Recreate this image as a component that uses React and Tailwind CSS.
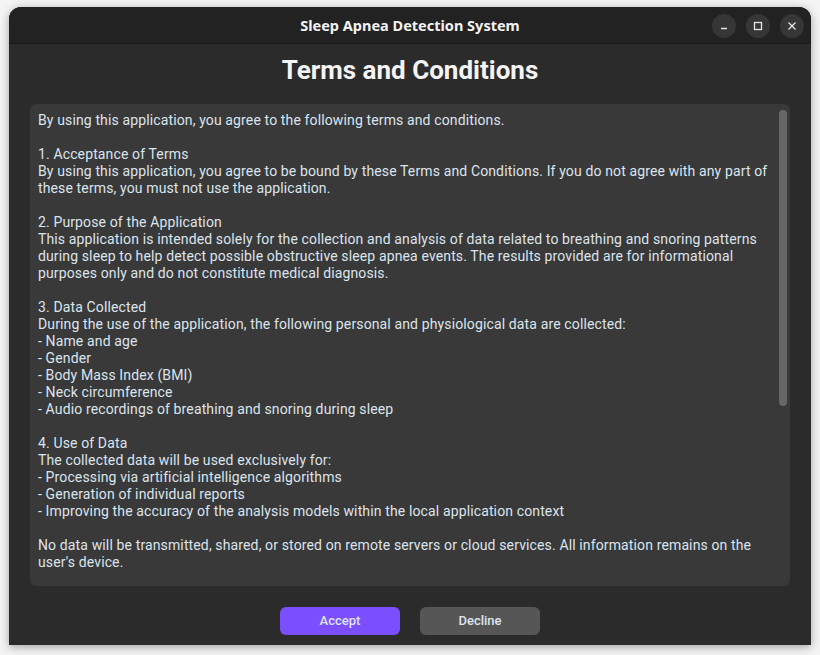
import React from 'react';

const lines = [
  'By using this application, you agree to the following terms and conditions.',
  '',
  '1. Acceptance of Terms',
  'By using this application, you agree to be bound by these Terms and Conditions. If you do not agree with any part of',
  'these terms, you must not use the application.',
  '',
  '2. Purpose of the Application',
  'This application is intended solely for the collection and analysis of data related to breathing and snoring patterns',
  'during sleep to help detect possible obstructive sleep apnea events. The results provided are for informational',
  'purposes only and do not constitute medical diagnosis.',
  '',
  '3. Data Collected',
  'During the use of the application, the following personal and physiological data are collected:',
  '- Name and age',
  '- Gender',
  '- Body Mass Index (BMI)',
  '- Neck circumference',
  '- Audio recordings of breathing and snoring during sleep',
  '',
  '4. Use of Data',
  'The collected data will be used exclusively for:',
  '- Processing via artificial intelligence algorithms',
  '- Generation of individual reports',
  '- Improving the accuracy of the analysis models within the local application context',
  '',
  'No data will be transmitted, shared, or stored on remote servers or cloud services. All information remains on the',
  "user's device.",
];

function WindowButton({ children }) {
  return (
    <div className="w-6 h-6 rounded-full bg-[#363636] flex items-center justify-center text-[#e6e6e6]">
      {children}
    </div>
  );
}

export default function App() {
  return (
    <div className="w-[820px] h-[655px] bg-[#f4f4f4] pt-[7px] pb-[10px] px-[9px] font-['Roboto',sans-serif]">
      <div className="h-full flex flex-col rounded-t-[12px] overflow-hidden bg-[#2b2b2b] shadow-[0_2px_10px_rgba(0,0,0,0.35)]">
        {/* Title bar */}
        <div className="h-[37px] shrink-0 bg-[#222222] border-b border-[#1a1a1a] relative flex items-center justify-center">
          <span className="pt-[2px] text-[14.5px] font-bold text-[#f2f2f2] font-['Noto_Sans',sans-serif]">
            Sleep Apnea Detection System
          </span>
          <div className="absolute right-[7px] top-[7px] flex gap-[10px]">
            <WindowButton>
              <svg width="10" height="10" viewBox="0 0 10 10">
                <path d="M2 7.5h6" stroke="currentColor" strokeWidth="1.3" />
              </svg>
            </WindowButton>
            <WindowButton>
              <svg width="10" height="10" viewBox="0 0 10 10">
                <rect x="1.5" y="1.5" width="7" height="7" fill="none" stroke="currentColor" strokeWidth="1.3" />
              </svg>
            </WindowButton>
            <WindowButton>
              <svg width="10" height="10" viewBox="0 0 10 10">
                <path d="M1.5 1.5l7 7M8.5 1.5l-7 7" stroke="currentColor" strokeWidth="1.3" />
              </svg>
            </WindowButton>
          </div>
        </div>

        {/* Body */}
        <div className="flex-1 flex flex-col items-center px-[21px] pt-[11px] pb-[10px]">
          <h1 className="text-[26px] leading-[30px] font-bold text-[#f4f4f4]">Terms and Conditions</h1>

          <div className="mt-[19px] w-full h-[482px] rounded-[6px] bg-[#393939] flex">
            <div className="flex-1 pl-[8px] pt-[8px] text-[14px] leading-[17px] tracking-[0.13px] text-[#dce4ee] whitespace-pre">
              {lines.map((l, i) => (
                <div key={i} className="h-[17px]">{l}</div>
              ))}
            </div>
            <div className="w-[8px] mr-[3px] mt-[6px] h-[296px] rounded-full bg-[#676767]" />
          </div>

          <div className="mt-[21px] flex gap-[20px]">
            <button className="w-[120px] h-[28px] rounded-[6px] bg-[#7b4fff] text-[13px] font-medium text-[#dce4ee]">
              Accept
            </button>
            <button className="w-[120px] h-[28px] rounded-[6px] bg-[#565656] text-[13px] font-medium text-[#dce4ee]">
              Decline
            </button>
          </div>
        </div>
      </div>
    </div>
  );
}
